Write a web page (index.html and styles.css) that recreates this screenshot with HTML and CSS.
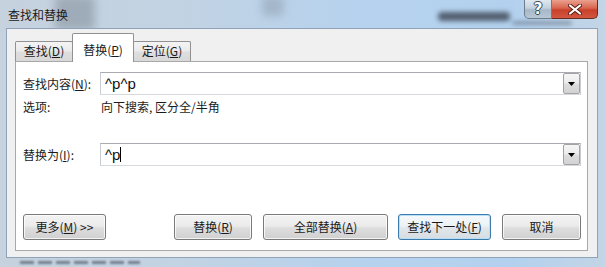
FILE: index.html
```
<!DOCTYPE html>
<html lang="zh-CN">
<head>
<meta charset="utf-8">
<title>查找和替换</title>
<link rel="stylesheet" href="styles.css">
</head>
<body>
<div class="window">
  <div class="titlebar">
    <span class="haze haze-a"></span>
    <span class="haze haze-b"></span>
    <span class="haze haze-c"></span>
    <span class="haze haze-d"></span>
    <div class="title">查找和替换</div>
    <div class="caption-btns">
      <div class="cap help">?</div>
      <div class="cap close">
        <svg width="14" height="11" viewBox="0 0 14 11"><path d="M2 1.5 L12 9.5 M12 1.5 L2 9.5" stroke="#5a1f17" stroke-width="4" stroke-linecap="round"/><path d="M2 1.5 L12 9.5 M12 1.5 L2 9.5" stroke="#ffffff" stroke-width="2.2" stroke-linecap="round"/></svg>
      </div>
    </div>
  </div>
  <div class="frame">
    <div class="body">
      <div class="tabs">
        <div class="tab">查找(<u>D</u>)</div>
        <div class="tab active">替换(<u>P</u>)</div>
        <div class="tab">定位(<u>G</u>)</div>
      </div>
      <div class="panel">
        <div class="row">
          <span class="lbl">查找内容(<u>N</u>):</span>
          <div class="combo">
            <span class="val">^p^p</span>
            <span class="drop"><svg width="7" height="4" viewBox="0 0 7 4"><polygon points="0,0 7,0 3.5,4" fill="#000"/></svg></span>
          </div>
        </div>
        <div class="row opts">
          <span class="lbl">选项:</span>
          <span class="optval">向下搜索, 区分全/半角</span>
        </div>
        <div class="row replace">
          <span class="lbl">替换为(<u>I</u>):</span>
          <div class="combo">
            <span class="val">^p</span><span class="caret"></span>
            <span class="drop"><svg width="7" height="4" viewBox="0 0 7 4"><polygon points="0,0 7,0 3.5,4" fill="#000"/></svg></span>
          </div>
        </div>
        <div class="btnrow">
          <button class="btn b-more">更多(<u>M</u>) &gt;&gt;</button>
          <div class="btngroup">
            <button class="btn b-rep">替换(<u>R</u>)</button>
            <button class="btn b-all">全部替换(<u>A</u>)</button>
            <button class="btn b-next default">查找下一处(<u>F</u>)</button>
            <button class="btn b-cancel">取消</button>
          </div>
        </div>
      </div>
    </div>
  </div>
  <div class="bottom-haze"></div>
</div>
</body>
</html>
```

FILE: styles.css
```
* { box-sizing: border-box; }
html, body { margin: 0; padding: 0; }
body {
  width: 605px;
  height: 267px;
  overflow: hidden;
  font-family: "Noto Sans CJK SC", "Noto Sans", sans-serif;
  font-size: 12px;
  color: #1c1c1c;
}
u { text-decoration: underline; text-underline-offset: 1px; }

.window {
  width: 605px;
  height: 267px;
  display: flex;
  flex-direction: column;
  position: relative;
  overflow: hidden;
  background: linear-gradient(90deg, #c6d2de 0%, #c2d3e3 30%, #b6d2ee 60%, #b3d1ee 85%, #c3d5e6 100%);
}

.titlebar {
  height: 28px;
  flex: none;
  display: flex;
  align-items: flex-start;
  position: relative;
}
.haze {
  position: absolute;
  filter: blur(4px);
  border-radius: 4px;
}
.haze-a { left: 55px; top: -4px; width: 40px; height: 34px; background: rgba(90, 100, 110, 0.35); }
.haze-b { left: 262px; top: -4px; width: 22px; height: 20px; background: rgba(90, 100, 110, 0.25); }
.haze-c { left: 438px; top: 12px; width: 72px; height: 9px; background: rgba(40, 45, 55, 0.7); filter: blur(2.5px); }
.haze-d { left: 512px; top: 21px; width: 60px; height: 4px; background: rgba(70, 80, 95, 0.45); filter: blur(2px); }

.title {
  position: relative;
  padding: 7px 0 0 8px;
  line-height: 16px;
  font-size: 12px;
  color: #1a1a1a;
}
.caption-btns {
  margin-left: auto;
  margin-right: 7px;
  display: flex;
  height: 19px;
  position: relative;
}
.cap {
  height: 19px;
  display: flex;
  align-items: center;
  justify-content: center;
}
.help {
  width: 28px;
  border: 1px solid #6d7c8d;
  border-top: none;
  border-radius: 0 0 0 5px;
  background: linear-gradient(#e0e8ef 0%, #c3d0dc 45%, #a7b8c9 55%, #b8c7d5 100%);
  color: #ffffff;
  font-family: "DejaVu Sans", sans-serif;
  font-weight: bold;
  font-size: 15px;
  line-height: 19px;
  text-shadow: 0 0 1px #2c3a4a, 1px 0 0 #3d4b5b, -1px 0 0 #3d4b5b, 0 1px 0 #3d4b5b, 0 -1px 0 #3d4b5b;
}
.close {
  width: 46px;
  border: 1px solid #6a2b22;
  border-left: none;
  border-top: none;
  border-radius: 0 0 5px 0;
  background: linear-gradient(#eaa08f 0%, #d9654e 45%, #c7402a 55%, #d4573f 100%);
}

.frame {
  flex: 1;
  display: flex;
  padding: 0 7px 9px 6px;
}
.body {
  flex: 1;
  display: flex;
  flex-direction: column;
  background: #f0f0f0;
  border: 1px solid #8fa3b8;
  padding: 4px 9px 6px 8px;
  position: relative;
}

.tabs {
  height: 28px;
  display: flex;
  align-items: flex-end;
  flex: none;
}
.tab {
  width: 58px;
  height: 20px;
  border: 1px solid #919191;
  border-bottom: none;
  border-radius: 2px 2px 0 0;
  background: linear-gradient(#f4f4f4 0%, #ebebeb 45%, #dedede 55%, #d8d8d8 100%);
  text-align: center;
  line-height: 18px;
  color: #1a1a1a;
}
.tab + .tab { margin-left: -1px; }
.tab.active {
  width: 62px;
  height: 29px;
  margin-bottom: -1px;
  background: #ffffff;
  position: relative;
  z-index: 1;
  padding-top: 7px;
  line-height: 18px;
}

.panel {
  flex: 1;
  background: #ffffff;
  border: 1px solid #a8a8a8;
  padding: 10px 6px 10px 7px;
  display: flex;
  flex-direction: column;
}
.row {
  display: flex;
  align-items: center;
}
.lbl {
  width: 77px;
  flex: none;
  line-height: 16px;
  color: #1a1a1a;
}
.combo {
  flex: 1;
  height: 23px;
  display: flex;
  align-items: center;
  padding-left: 4px;
  background: #ffffff;
  border: 1px solid;
  border-color: #a9abb1 #c9ccd3 #d6d9de #c9ccd3;
}
.val {
  font-family: "Liberation Sans", Arial, sans-serif;
  font-size: 15px;
  color: #111;
  line-height: 18px;
}
.caret {
  width: 1px;
  height: 15px;
  background: #000;
  margin-left: 0px;
}
.drop {
  margin-left: auto;
  width: 17px;
  height: 21px;
  border: 1px solid #a3a3a3;
  border-radius: 2px;
  background: linear-gradient(#f6f6f6 0%, #ececec 45%, #dddddd 55%, #d2d2d2 100%);
  display: flex;
  align-items: center;
  justify-content: center;
}
.opts {
  margin-top: 4px;
}
.optval {
  padding-left: 1px;
  line-height: 16px;
}
.replace {
  margin-top: 28px;
}

.btnrow {
  margin-top: auto;
  display: flex;
  justify-content: space-between;
  height: 26px;
}
.btngroup {
  display: flex;
  gap: 0;
}
.btn {
  height: 26px;
  padding: 0;
  font-family: "Noto Sans CJK SC", "Noto Sans", sans-serif;
  font-size: 12px;
  color: #1a1a1a;
  border: 1px solid #7a7a7a;
  border-radius: 3px;
  background: linear-gradient(#f3f3f3 0%, #ebebeb 45%, #dddddd 55%, #d0d0d0 100%);
  box-shadow: inset 0 0 0 1px rgba(255, 255, 255, 0.75);
  line-height: 24px;
}
.b-more { width: 83px; }
.b-rep { width: 78px; }
.b-all { width: 125px; margin-left: 11px; }
.b-next { width: 93px; margin-left: 10px; }
.b-cancel { width: 79px; margin-left: 11px; }
.btn.default {
  border-color: #3d7bad;
  box-shadow: inset 0 0 0 1px #b6e0f7;
  background: linear-gradient(#f5f9fb 0%, #edf2f5 45%, #e0e6ea 55%, #d6dde2 100%);
}

.bottom-haze {
  position: absolute;
  left: 20px;
  bottom: 3px;
  width: 120px;
  height: 3px;
  background: repeating-linear-gradient(90deg, rgba(60, 70, 85, 0.6) 0 14px, transparent 14px 18px);
  filter: blur(1px);
}
```
